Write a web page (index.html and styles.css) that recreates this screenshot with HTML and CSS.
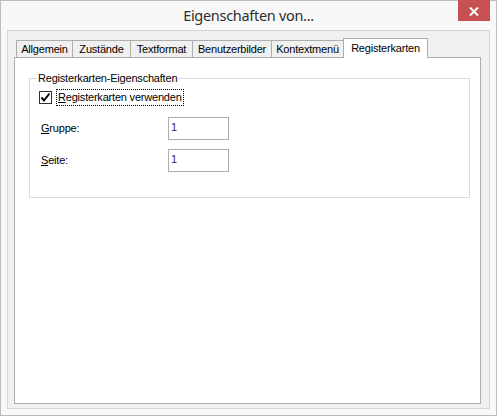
FILE: index.html
```html
<!DOCTYPE html>
<html lang="de">
<head>
  <meta charset="UTF-8">
  <title>Eigenschaften von...</title>
  <link rel="stylesheet" href="styles.css">
</head>
<body>
  <div class="window">
    <div class="titlebar">
      <span></span>
      <div class="title">Eigenschaften von...</div>
      <div class="close">
        <svg width="10" height="9" viewBox="0 0 10 9">
          <path d="M1 0.5 L9 8.5 M9 0.5 L1 8.5" stroke="#fff" stroke-width="2"/>
        </svg>
      </div>
    </div>

    <div class="client">
      <div class="tabs">
        <div class="tab t-allgemein">Allgemein</div>
        <div class="tab t-zustaende">Zustände</div>
        <div class="tab t-textformat">Textformat</div>
        <div class="tab t-bilder">Benutzerbilder</div>
        <div class="tab t-kontext">Kontextmenü</div>
        <div class="tab active t-register">Registerkarten</div>
      </div>

      <div class="panel">
        <fieldset class="group">
          <legend>Registerkarten-Eigenschaften</legend>
          <div class="group-body">
            <div class="check">
              <span class="box">
                <svg width="11" height="11" viewBox="0 0 11 11">
                  <path d="M1.5 5.5 L4 8.5 L9.5 1.5" fill="none" stroke="#000" stroke-width="2"/>
                </svg>
              </span>
              <span class="focus"><u>R</u>egisterkarten verwenden</span>
            </div>
            <div class="field">
              <span class="lbl"><u>G</u>ruppe:</span>
              <span class="input">1</span>
            </div>
            <div class="field">
              <span class="lbl"><u>S</u>eite:</span>
              <span class="input">1</span>
            </div>
          </div>
        </fieldset>
      </div>
    </div>
  </div>
</body>
</html>
```

FILE: styles.css
```css
body {
  margin: 0;
  background: #fff;
  font-family: "Liberation Sans", Arial, sans-serif;
  font-size: 11px;
  color: #000;
}
.window {
  width: 497px;
  height: 416px;
  box-sizing: border-box;
  border: 1px solid #bcbcbc;
  background: #f8f8f8;
  display: flex;
  flex-direction: column;
}
.titlebar {
  height: 29px;
  display: grid;
  grid-template-columns: 1fr auto 1fr;
  align-items: start;
}
.title {
  font-family: "Noto Sans", "Open Sans", sans-serif;
  font-size: 14.5px;
  letter-spacing: -0.3px;
  color: #2e2e2e;
  line-height: 20px;
  padding-top: 4px;
}
.close {
  justify-self: end;
  width: 32px;
  height: 21px;
  margin-top: -1px;
  margin-right: 6px;
  background: #c75050;
  display: flex;
  align-items: center;
  justify-content: center;
}
.close svg { display: block; margin-top: 1px; }

.client {
  flex: 1;
  margin: 0 6px 6px;
  border: 1px solid #d6d6d6;
  background: #f0f0f0;
  padding: 7px 8px 4px 6px;
  display: flex;
  flex-direction: column;
}
.tabs {
  height: 19px;
  padding-left: 2px;
  display: flex;
  align-items: flex-end;
  letter-spacing: -0.2px;
}
.tab {
  box-sizing: border-box;
  height: 17px;
  border: 1px solid #adadad;
  border-bottom: none;
  background: #f0f0f0;
  line-height: 13px;
  padding-top: 2px;
  text-align: center;
  margin-left: -1px;
}
.tab:first-child { margin-left: 0; }
.tab.active {
  height: 20px;
  margin-bottom: -1px;
  background: #fff;
  position: relative;
  z-index: 1;
  padding-top: 3px;
}
.t-allgemein { width: 57px; }
.t-zustaende { width: 59px; }
.t-textformat { width: 63px; }
.t-bilder { width: 80px; }
.t-kontext { width: 73px; }
.t-register { width: 85px; }

.panel {
  flex: 1;
  border: 1px solid #adadad;
  background: #fff;
  padding: 14px 10px 0 14px;
}
.group {
  margin: 0;
  min-width: 0;
  border: 1px solid #dcdcdc;
  padding: 0 10px 25px 7px;
  letter-spacing: -0.2px;
}
.group legend {
  padding: 0 1px;
  line-height: 13px;
}
.group-body { padding-left: 2px; }

.check {
  margin-top: 4px;
  height: 17px;
  display: flex;
  align-items: center;
}
.box {
  box-sizing: border-box;
  width: 13px;
  height: 13px;
  border: 1px solid #333;
  background: #fff;
  margin-right: 4px;
}
.box svg { display: block; }
.focus {
  border: 1px dotted #000;
  padding: 0 1px;
  line-height: 15px;
}

.field {
  margin-top: 11px;
  padding-left: 2px;
  display: grid;
  grid-template-columns: 127px 61px;
  align-items: center;
}
.field + .field { margin-top: 9px; }
.lbl { line-height: 13px; }
.input {
  box-sizing: border-box;
  height: 23px;
  border: 1px solid #abadb3;
  padding: 3px 0 0 2px;
  line-height: 13px;
  color: #3a1a5a;
}
```
